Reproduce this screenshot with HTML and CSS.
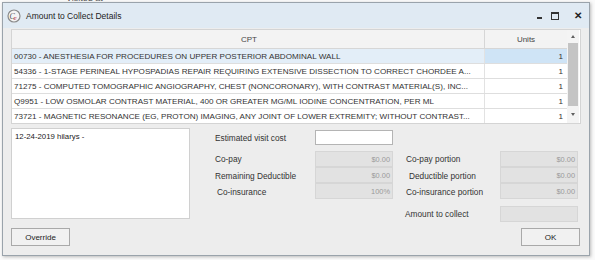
FILE: index.html
```html
<!DOCTYPE html>
<html lang="en">
  <head>
    <meta charset="UTF-8" />
    <title>Amount to Collect Details</title>
    <link rel="stylesheet" href="styles.css">
  </head>
  <body>
    <div class="behind"><span class="behind-text">Visited at</span></div>
    <div class="window">
      <div class="titlebar">
        <svg class="app-icon" width="14" height="14" viewBox="0 0 14 14">
          <circle cx="7" cy="7" r="6" fill="#f4f4f4" stroke="#8a8a8a" stroke-width="1.2" />
          <text x="2.4" y="10" font-size="8" font-family="Liberation Serif, serif" font-style="italic" fill="#555">C</text>
          <text x="6.6" y="10.5" font-size="7" font-family="Liberation Serif, serif" font-style="italic" fill="#c0282d">e</text>
        </svg>
        <span class="title">Amount to Collect Details</span>
        <div class="controls">
          <span class="ctl ctl-min"></span>
          <span class="ctl ctl-max"></span>
          <span class="ctl ctl-close">&#x2715;</span>
        </div>
      </div>

      <div class="grid">
        <div class="grid-body">
          <div class="grid-head">
            <div class="cell cpt head">CPT</div>
            <div class="cell units head">Units</div>
          </div>
          <div class="grid-row selected">
            <div class="cell cpt">00730 - ANESTHESIA FOR PROCEDURES ON UPPER POSTERIOR ABDOMINAL WALL</div>
            <div class="cell units">1</div>
          </div>
          <div class="grid-row">
            <div class="cell cpt">54336 - 1-STAGE PERINEAL HYPOSPADIAS REPAIR REQUIRING EXTENSIVE DISSECTION TO CORRECT CHORDEE A...</div>
            <div class="cell units">1</div>
          </div>
          <div class="grid-row">
            <div class="cell cpt">71275 - COMPUTED TOMOGRAPHIC ANGIOGRAPHY, CHEST (NONCORONARY), WITH CONTRAST MATERIAL(S), INC...</div>
            <div class="cell units">1</div>
          </div>
          <div class="grid-row">
            <div class="cell cpt">Q9951 - LOW OSMOLAR CONTRAST MATERIAL, 400 OR GREATER MG/ML IODINE CONCENTRATION, PER ML</div>
            <div class="cell units">1</div>
          </div>
          <div class="grid-row last">
            <div class="cell cpt">73721 - MAGNETIC RESONANCE (EG, PROTON) IMAGING, ANY JOINT OF LOWER EXTREMITY; WITHOUT CONTRAST...</div>
            <div class="cell units">1</div>
          </div>
        </div>
        <div class="scrollbar">
          <span class="arrow up"></span>
          <span class="thumb"></span>
          <span class="arrow down"></span>
        </div>
      </div>

      <div class="lower">
        <div class="notes">12-24-2019 hilarys -</div>
        <div class="costs">
          <div class="label">Estimated visit cost</div>
          <div class="field editable"></div>
          <div></div>
          <div></div>

          <div class="label top-gap">Co-pay</div>
          <div class="field top-gap">$0.00</div>
          <div class="label right top-gap">Co-pay portion</div>
          <div class="field top-gap">$0.00</div>

          <div class="label">Remaining Deductible</div>
          <div class="field">$0.00</div>
          <div class="label right shift">Deductible portion</div>
          <div class="field">$0.00</div>

          <div class="label shift">Co-insurance</div>
          <div class="field">100%</div>
          <div class="label right">Co-insurance portion</div>
          <div class="field">$0.00</div>

          <div></div>
          <div></div>
          <div class="label right amount-label">Amount to collect</div>
          <div class="field amount"></div>
        </div>
      </div>

      <div class="buttons">
        <button class="btn">Override</button>
        <button class="btn ok">OK</button>
      </div>
    </div>
  </body>
</html>
```

FILE: styles.css
```css
body {
  margin: 0;
  background-color: #fafafa;
  font-family: "Liberation Sans", Arial, sans-serif;
  width: 595px;
  height: 260px;
  overflow: hidden;
}
.behind {
  height: 2px;
  overflow: hidden;
  position: relative;
}
.behind-text {
  position: absolute;
  left: 66px;
  top: -7px;
  font-size: 9px;
  color: #555;
}
.window {
  margin-left: 2px;
  width: 586px;
  height: 252px;
  border: 1px solid #9aa3ab;
  background-color: #ededed;
  box-shadow: 1px 1px 3px rgba(0, 0, 0, 0.25);
  display: flex;
  flex-direction: column;
}
.titlebar {
  height: 25px;
  background-color: #e0eaf3;
  display: flex;
  align-items: center;
  padding: 0 0 0 4px;
}
.app-icon {
  margin-right: 5px;
}
.title {
  font-size: 8.5px;
  color: #222;
}
.controls {
  margin-left: auto;
  display: flex;
  align-items: center;
  height: 100%;
}
.ctl {
  display: flex;
  align-items: center;
  justify-content: center;
  color: #222;
}
.ctl-min {
  width: 5px;
  height: 2px;
  background-color: #333;
  margin: 4px 0 0 0;
}
.ctl-max {
  width: 6px;
  height: 5px;
  border: 1px solid #333;
  border-top-width: 2px;
  margin-left: 9px;
}
.ctl-close {
  font-size: 10px;
  margin-left: 15px;
  margin-right: 7px;
  font-weight: bold;
}

.grid {
  margin: 1px 0 0 8px;
  width: 568px;
  height: 93px;
  border: 1px solid #d4d4d4;
  background-color: #fff;
  display: flex;
}
.grid-body {
  width: 555px;
}
.grid-head,
.grid-row {
  display: flex;
}
.grid-head {
  height: 18px;
  background-color: #f3f3f3;
  border-bottom: 1px solid #d6d6d6;
}
.grid-row {
  height: 14px;
  border-bottom: 1px solid #dedede;
}
.grid-row.last {
  border-bottom: none;
}
.cell {
  font-size: 8.1px;
  color: #333;
  white-space: nowrap;
  overflow: hidden;
  display: flex;
  align-items: center;
}
.cpt {
  width: 470px;
  padding-left: 2px;
  border-right: 1px solid #e2e2e2;
}
.units {
  flex: 1;
  justify-content: flex-end;
  padding-right: 4px;
}
.head {
  font-size: 8px;
  color: #444;
  justify-content: center;
  border-right-color: #d6d6d6;
}
.head.units {
  justify-content: center;
  padding-right: 0;
}
.selected .cpt {
  background-color: #e3eef8;
}
.selected .units {
  background-color: #cfe4f6;
}
.scrollbar {
  width: 12px;
  background-color: #f4f4f4;
  display: flex;
  flex-direction: column;
  align-items: center;
}
.arrow {
  width: 0;
  height: 0;
  border-left: 2.5px solid transparent;
  border-right: 2.5px solid transparent;
}
.arrow.up {
  margin-top: 5px;
  border-bottom: 3px solid #606060;
}
.arrow.down {
  margin-top: 7px;
  border-top: 3px solid #606060;
}
.thumb {
  margin-top: 5px;
  width: 10px;
  height: 63px;
  background-color: #c4c4c4;
}

.lower {
  display: flex;
  margin: 4px 0 0 8px;
}
.notes {
  border: 1px solid #d0d0d0;
  background-color: #fff;
  font-size: 7.8px;
  color: #222;
  padding: 3px 0 0 3px;
  box-sizing: border-box;
  width: 179px;
  height: 91px;
}
.costs {
  margin: 2px 0 0 25px;
  display: grid;
  grid-template-columns: 100px 78px 107px 78px;
  grid-template-rows: 15px 22px 16px 16px 23px;
  align-items: end;
}
.label {
  font-size: 8.3px;
  color: #333;
  white-space: nowrap;
  align-self: center;
  padding-top: 1px;
}
.label.top-gap {
  align-self: end;
  padding-bottom: 3px;
}
.label.right {
  padding-left: 13px;
}
.label.shift {
  padding-left: 2px;
}
.label.right.shift {
  padding-left: 16px;
}
.field {
  box-sizing: border-box;
  height: 16px;
  background-color: #e2e2e2;
  border: 1px solid #d6d6d6;
  font-size: 7.4px;
  color: #9a9a9a;
  display: flex;
  align-items: center;
  justify-content: flex-end;
  padding-right: 2px;
}
.field.editable {
  background-color: #fff;
  border-color: #b4b4b4;
  height: 15px;
  align-self: center;
}
.label.amount-label {
  align-self: end;
  padding: 0 0 3px 12px;
}
.amount {
  height: 16px;
}

.buttons {
  display: flex;
  justify-content: space-between;
  margin: 6px 9px 0 8px;
}
.btn {
  width: 59px;
  height: 18px;
  border: 1px solid #a9a9a9;
  background-color: #f1f1f1;
  font-family: "Liberation Sans", Arial, sans-serif;
  font-size: 8px;
  color: #222;
  padding: 0;
}
```
